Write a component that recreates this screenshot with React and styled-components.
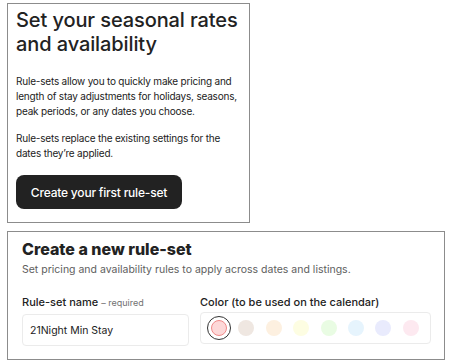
import React from "react";
import styled, { createGlobalStyle } from "styled-components";

const Global = createGlobalStyle`
  html, body { margin: 0; padding: 0; background: #fff; }
  body { font-family: Inter, "Noto Sans", "Liberation Sans", sans-serif; color: #222; }
  * { box-sizing: border-box; }
`;

const Page = styled.div`
  display: flex;
  flex-direction: column;
  align-items: flex-start;
  gap: 8px;
  padding: 3px 0 0 7px;
`;

const IntroCard = styled.section`
  width: 243px;
  height: 220px;
  border: 1px solid #8c8c8c;
  padding: 4px 8px 0 8px;
  display: flex;
  flex-direction: column;
  align-items: flex-start;
`;

const BigTitle = styled.h1`
  margin: 0;
  font-size: 20px;
  line-height: 24px;
  font-weight: 500;
  letter-spacing: -0.1px;
  white-space: nowrap;
`;

const Para = styled.p`
  margin: ${(p) => p.$top}px 0 0 0;
  font-size: 10px;
  line-height: 15px;
  font-weight: 400;
  letter-spacing: -0.2px;
`;

const PrimaryButton = styled.button`
  margin-top: 14px;
  width: 166px;
  height: 34px;
  border: 0;
  border-radius: 8px;
  background: #222;
  color: #fff;
  font-family: inherit;
  font-size: 12px;
  font-weight: 500;
  letter-spacing: -0.2px;
  cursor: pointer;
`;

const FormCard = styled.section`
  width: 438px;
  height: 129px;
  border: 1px solid #8c8c8c;
  padding: 7px 14px 0 14px;
`;

const FormTitle = styled.h2`
  margin: 0;
  font-size: 16px;
  line-height: 20px;
  font-weight: 800;
`;

const FormSub = styled.p`
  margin: 4px 0 0 0;
  font-size: 10.5px;
  line-height: 14px;
  color: #5e5e5e;
`;

const Fields = styled.div`
  margin-top: 18px;
  display: grid;
  grid-template-columns: 167px 231px;
  column-gap: 11px;
`;

const Field = styled.div`
  display: flex;
  flex-direction: column;
  gap: 4px;
`;

const Label = styled.div`
  font-size: 11px;
  line-height: 14px;
  font-weight: 500;
  white-space: nowrap;
`;

const Hint = styled.span`
  font-size: 9px;
  color: #717171;
  font-weight: 400;
`;

const TextBox = styled.div`
  height: 32px;
  border: 1px solid #ebebeb;
  border-radius: 4px;
  display: flex;
  align-items: center;
  padding: 0 7px;
  font-size: 10.5px;
`;

const SwatchBox = styled.div`
  height: 32px;
  border: 1px solid #ebebeb;
  border-radius: 4px;
  display: flex;
  align-items: center;
  gap: 3.4px;
  padding: 0 6px;
  margin-top: -1px;
`;

const Swatch = styled.div`
  width: 24px;
  height: 24px;
  border-radius: 50%;
  display: flex;
  align-items: center;
  justify-content: center;
  border: ${(p) => (p.$selected ? "1.5px solid #333" : "1.5px solid transparent")};
`;

const Dot = styled.div`
  width: 16px;
  height: 16px;
  border-radius: 50%;
  background: ${(p) => p.$color};
  border: ${(p) => (p.$selected ? "1px solid #f08a8a" : "none")};
`;

const colors = [
  "#fdd8d8",
  "#efe7e1",
  "#fdf0e0",
  "#fdfde2",
  "#e9fce3",
  "#e6f4fd",
  "#e9ebfd",
  "#fde9f0",
];

export default function App() {
  return (
    <>
      <Global />
      <Page>
        <IntroCard>
          <BigTitle>
            Set your seasonal rates
            <br />
            and availability
          </BigTitle>
          <Para $top={18}>
            Rule-sets allow you to quickly make pricing and length of stay
            adjustments for holidays, seasons, peak periods, or any dates you
            choose.
          </Para>
          <Para $top={12}>
            Rule-sets replace the existing settings for the dates they’re
            applied.
          </Para>
          <PrimaryButton>Create your first rule-set</PrimaryButton>
        </IntroCard>
        <FormCard>
          <FormTitle>Create a new rule-set</FormTitle>
          <FormSub>
            Set pricing and availability rules to apply across dates and
            listings.
          </FormSub>
          <Fields>
            <Field>
              <Label>
                Rule-set name <Hint>– required</Hint>
              </Label>
              <TextBox>21Night Min Stay</TextBox>
            </Field>
            <Field>
              <Label>Color (to be used on the calendar)</Label>
              <SwatchBox>
                {colors.map((c, i) => (
                  <Swatch key={c} $selected={i === 0}>
                    <Dot $color={c} $selected={i === 0} />
                  </Swatch>
                ))}
              </SwatchBox>
            </Field>
          </Fields>
        </FormCard>
      </Page>
    </>
  );
}
